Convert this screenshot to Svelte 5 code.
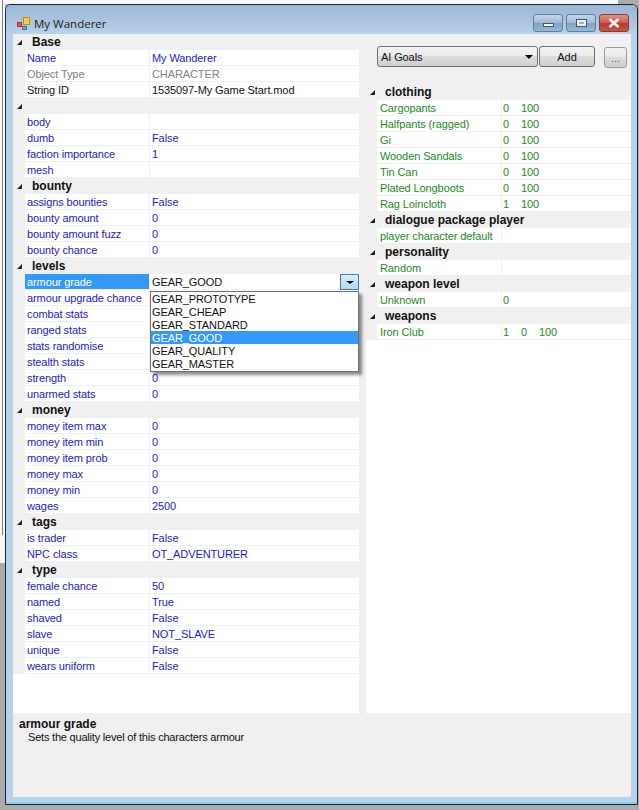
<script>
  const left = [
    { title: 'Base', rows: [['Name','My Wanderer','b'],['Object Type','CHARACTER','g'],['String ID','1535097-My Game Start.mod','k']] },
    { title: '', rows: [['body',''],['dumb','False'],['faction importance','1'],['mesh','']] },
    { title: 'bounty', rows: [['assigns bounties','False'],['bounty amount','0'],['bounty amount fuzz','0'],['bounty chance','0']] },
    { title: 'levels', rows: [['armour grade','GEAR_GOOD','sel'],['armour upgrade chance',''],['combat stats',''],['ranged stats',''],['stats randomise',''],['stealth stats',''],['strength','0'],['unarmed stats','0']] },
    { title: 'money', rows: [['money item max','0'],['money item min','0'],['money item prob','0'],['money max','0'],['money min','0'],['wages','2500']] },
    { title: 'tags', rows: [['is trader','False'],['NPC class','OT_ADVENTURER']] },
    { title: 'type', rows: [['female chance','50'],['named','True'],['shaved','False'],['slave','NOT_SLAVE'],['unique','False'],['wears uniform','False']] }
  ];
  const right = [
    { title: 'clothing', rows: [['Cargopants','0 100'],['Halfpants (ragged)','0 100'],['Gi','0 100'],['Wooden Sandals','0 100'],['Tin Can','0 100'],['Plated Longboots','0 100'],['Rag Loincloth','1 100']] },
    { title: 'dialogue package player', rows: [['player character default','']] },
    { title: 'personality', rows: [['Random','']] },
    { title: 'weapon level', rows: [['Unknown','0']] },
    { title: 'weapons', rows: [['Iron Club','1 0 100']] }
  ];
  const options = ['GEAR_PROTOTYPE','GEAR_CHEAP','GEAR_STANDARD','GEAR_GOOD','GEAR_QUALITY','GEAR_MASTER'];
</script>

{#snippet grid(sections, cls)}
  <div class="grid {cls}">
    {#each sections as s}
      <div class="cat"><span class="tri"></span><span class="cat-t">{s.title}</span></div>
      {#each s.rows as r}
        <div class="row {r[2] ?? ''}">
          <div class="name">{r[0]}</div>
          <div class="val">
            {#if cls === 'green'}
              {#each r[1].split(' ') as p}<span class="num">{p}</span>{/each}
            {:else}
              {r[1]}
            {/if}
            {#if r[2] === 'sel'}<span class="ddbtn"><span class="ddarrow"></span></span>{/if}
          </div>
        </div>
      {/each}
    {/each}
  </div>
{/snippet}

<div class="page">
  <div class="window">
    <div class="titlebar">
      <svg class="appicon" width="13" height="13" viewBox="0 0 13 13">
        <rect x="0.5" y="5.5" width="4" height="4" fill="#e8503a" stroke="#b03828"/>
        <rect x="6.5" y="0.5" width="6" height="7" fill="#f7c93e" stroke="#b89020"/>
        <rect x="5.5" y="9.5" width="4" height="3" fill="#6aa0dc" stroke="#4a70a0"/>
      </svg>
      <span class="title">My Wanderer</span>
      <div class="caption">
        <button class="cap min" aria-label="Minimize"><span></span></button>
        <button class="cap max" aria-label="Maximize"><span></span></button>
        <button class="cap close" aria-label="Close">
          <svg width="14" height="10" viewBox="0 0 14 10"><path d="M2.5 1 L11.5 9 M11.5 1 L2.5 9" stroke="#f4ece8" stroke-width="2.8"/></svg>
        </button>
      </div>
    </div>
    <div class="client">
      <div class="panes">
        <div class="pane-left">
          <div class="gridwrap">
            {@render grid(left, 'blue')}
            <div class="dropdown">
              {#each options as o}<div class="opt" class:on={o === 'GEAR_GOOD'}>{o}</div>{/each}
            </div>
          </div>
        </div>
        <div class="pane-right">
          <div class="toolbar">
            <div class="combo"><span>AI Goals</span><span class="arrow"></span></div>
            <button class="btn add">Add</button>
            <button class="btn more">...</button>
          </div>
          {@render grid(right, 'green')}
        </div>
      </div>
      <div class="help">
        <div class="help-t">armour grade</div>
        <div class="help-d">Sets the quality level of this characters armour</div>
      </div>
    </div>
  </div>
</div>

<style>
  :global(body) { margin: 0; background: #ababab; }
  .page { width: 639px; height: 810px; padding: 4px 0 0 5px; box-sizing: border-box; overflow: hidden; font-family: "Liberation Sans", Arial, sans-serif; font-size: 11px; letter-spacing: -0.1px; background: linear-gradient(#808080, #808080) 2px 0 / 1px 535px no-repeat, linear-gradient(#f6f6f6, #f6f6f6) 0 0 / 618px 4px no-repeat, linear-gradient(#f6f6f6, #f6f6f6) 0 0 / 5px 563px no-repeat, #ababab; }
  .window { width: 633px; height: 801px; box-sizing: border-box; border: 1px solid #1c2630; border-radius: 6px 6px 0 0; background: #b9d1ea; padding: 0 6px 7px 7px; display: flex; flex-direction: column; box-shadow: inset 0 -2px 0 #7fd4f2, inset -2px 0 0 #a5d6f2; }
  .titlebar { height: 29px; flex: none; display: flex; align-items: center; position: relative; background: linear-gradient(#9ab6d4, #b9d1ea); margin: 0 -6px 0 -7px; padding: 7px 0 0 11px; box-sizing: border-box; border-radius: 5px 5px 0 0; }
  .appicon { margin-right: 4px; }
  .title { font-family: "Open Sans", sans-serif; font-size: 11.5px; letter-spacing: 0; color: #1a1a1a; }
  .caption { position: absolute; right: 8px; top: 9px; display: flex; gap: 3px; }
  .cap { width: 30px; height: 18px; padding: 0; border: 1px solid #5f7f9f; border-radius: 3px; display: flex; align-items: center; justify-content: center; background: linear-gradient(#c4d6e8, #9fbad6 48%, #7fa2c4 52%, #97b8d6); }
  .min span { width: 9px; height: 2px; background: #eef3f8; border: 1px solid #44566e; margin-top: 4px; }
  .max span { width: 5px; height: 2px; background: #8fb0cf; border: 2px solid #eef3f8; outline: 1px solid #44566e; }
  .close { border-color: #8a3a33; background: linear-gradient(#dc9284, #c9604f 48%, #b43c2c 52%, #c45a48); }
  .client { flex: 1; min-height: 0; display: flex; flex-direction: column; background: #f0f0f0; }
  .panes { height: 679px; flex: none; display: flex; }
  .pane-left { width: 346px; background: #fff; flex: none; }
  .pane-right { margin-left: 7px; flex: 1; background: #fff; display: flex; flex-direction: column; width: 0; }
  .gridwrap { position: relative; }
  .toolbar { height: 50px; flex: none; background: #f0f0f0; display: flex; align-items: flex-start; padding: 12px 0 0 11px; box-sizing: border-box; }
  .combo { width: 161px; height: 21px; box-sizing: border-box; border: 1px solid #707070; border-radius: 3px; background: linear-gradient(#f2f2f2 0, #ebebeb 48%, #dddddd 50%, #cfcfcf); display: flex; align-items: center; justify-content: space-between; padding: 0 4px 0 3px; color: #111; }
  .arrow { width: 0; height: 0; border-left: 4px solid transparent; border-right: 4px solid transparent; border-top: 4px solid #000; }
  .btn { font: inherit; color: #111; height: 21px; padding: 0; border: 1px solid #707070; border-radius: 3px; background: linear-gradient(#f2f2f2 0, #ebebeb 48%, #dddddd 50%, #cfcfcf); }
  .add { width: 56px; margin-left: 1px; }
  .more { width: 23px; margin-left: 9px; margin-top: 1px; color: #666; border-color: #999; }
  .grid { background: #fff; }
  .cat { height: 16px; background: #f0f0f0; position: relative; font-weight: bold; color: #111; font-size: 12px; letter-spacing: 0; }
  .cat-t { position: absolute; left: 19px; top: 1px; line-height: 15px; }
  .tri { position: absolute; left: 4px; top: 6px; width: 0; height: 0; border-left: 5px solid transparent; border-bottom: 5px solid #222; }
  .row { height: 16px; display: flex; background: #fff; border-left: 12px solid #f0f0f0; box-sizing: border-box; border-bottom: 1px solid #f0f0f0; line-height: 16px; }
  .name { width: 125px; flex: none; padding-left: 2px; box-sizing: border-box; border-right: 1px solid #f0f0f0; color: #1a1ad0; white-space: nowrap; overflow: hidden; }
  .val { flex: 1; padding-left: 2px; color: #1a1ad0; position: relative; white-space: nowrap; }
  .g .name, .g .val { color: #808080; }
  .k .name, .k .val { color: #111; }
  .sel .name { background: #3399ff; color: #fff; }
  .sel .val { color: #111; }
  .ddbtn { position: absolute; right: 0; top: 0; width: 19px; height: 16px; box-sizing: border-box; border: 1px solid #3c7fb1; background: linear-gradient(#d8eefb, #b0d9f3); display: flex; align-items: center; justify-content: center; }
  .ddarrow { width: 0; height: 0; border-left: 4px solid transparent; border-right: 4px solid transparent; border-top: 3px solid #000; }
  .green .name { color: #1c8c24; padding-left: 3px; }
  .green .val { color: #1c8c24; padding-left: 1px; }
  .green .row { border-left-width: 11px; }
  .num { display: inline-block; margin-right: 12px; }
  .dropdown { position: absolute; left: 137px; top: 257px; width: 209px; height: 81px; box-sizing: border-box; border: 1px solid #6e6e6e; background: #fff; box-shadow: 3px 3px 3px rgba(0,0,0,.45); color: #111; }
  .opt { height: 13px; line-height: 15px; padding-left: 1px; }
  .opt.on { background: #3399ff; color: #fff; }
  .help { flex: 1; padding: 5px 0 0 6px; color: #111; background: #f0f0f0; line-height: 13px; }
  .help-t { font-weight: bold; font-size: 12px; letter-spacing: 0; }
  .help-d { padding-left: 9px; letter-spacing: -0.2px; }
</style>
